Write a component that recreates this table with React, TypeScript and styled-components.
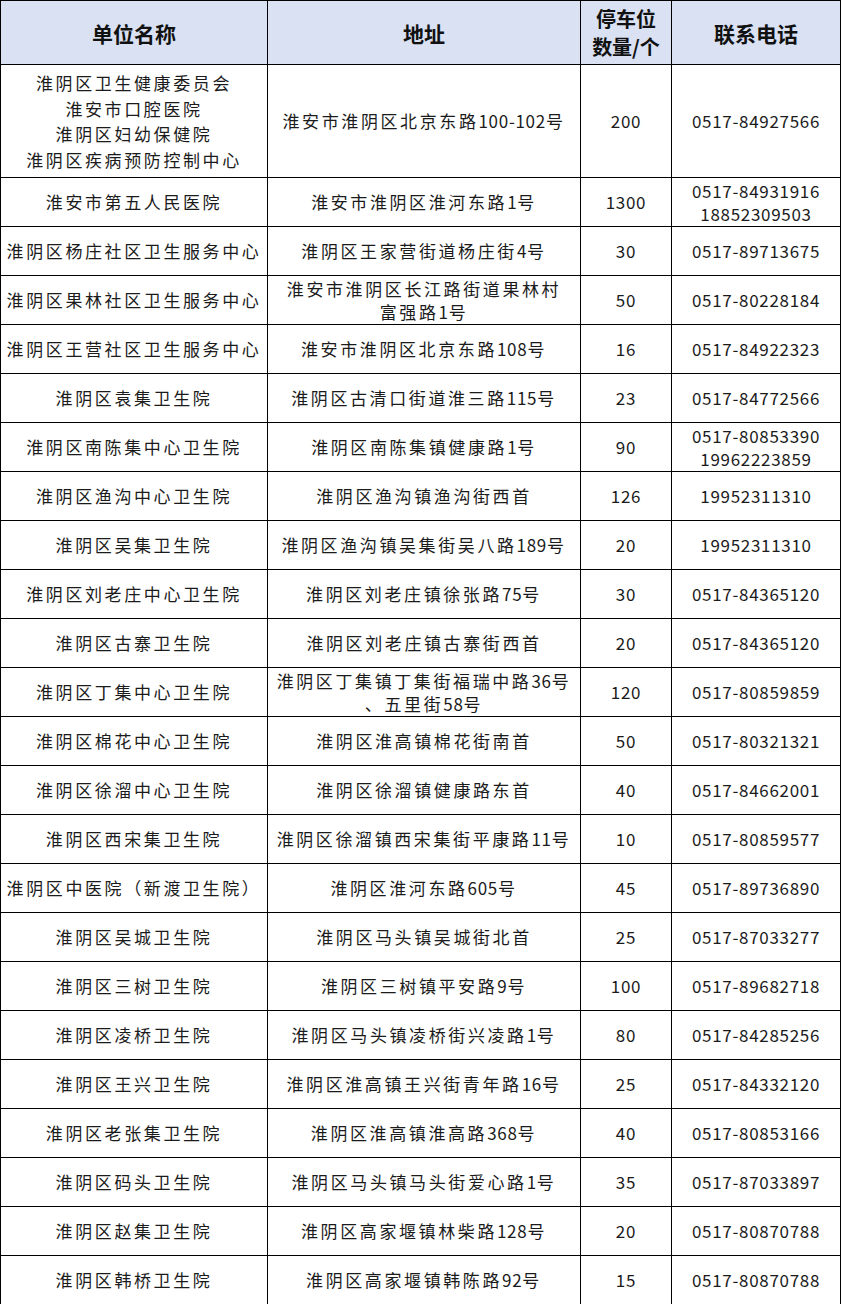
import React from "react";
import styled, { createGlobalStyle } from "styled-components";

interface Site {
    name: string[];
    address: string[];
    spaces: string;
    phones: string[];
}

const GlobalStyle = createGlobalStyle`
    html, body {
        margin: 0;
        padding: 0;
        background: #ffffff;
    }
    body {
        font-family: "Noto Sans CJK SC", sans-serif;
        color: #1b1b1b;
    }
`;

const Table = styled.table`
    width: 840px;
    border-collapse: collapse;
    table-layout: fixed;
    background: #ffffff;
`;

const Col = styled.col<{ $w: number }>`
    width: ${({ $w }) => $w}px;
`;

const HeadRow = styled.tr`
    height: 64px;
    background: #d9e1f3;
`;

const HeadCell = styled.th<{ $small?: boolean }>`
    border: 1px solid #000;
    padding: 0;
    text-align: center;
    vertical-align: middle;
    font-family: "Noto Sans CJK SC", serif;
    font-weight: 700;
    font-size: ${({ $small }) => ($small ? "20px" : "21px")};
    line-height: ${({ $small }) => ($small ? "28px" : "30px")};
    color: #111;
`;

const BodyRow = styled.tr<{ $h: number }>`
    height: ${({ $h }) => $h}px;
`;

const Cell = styled.td<{ $tall?: boolean }>`
    border: 1px solid #000;
    padding: 0;
    text-align: center;
    vertical-align: middle;
    font-size: 17px;
    line-height: ${({ $tall }) => ($tall ? "25.5px" : "23.5px")};
    letter-spacing: 2.6px;
    white-space: nowrap;
    overflow: hidden;
`;

// digits in the reference are narrow, so they get tighter tracking
const Num = styled.span`
    letter-spacing: 0.7px;
`;

const Line = styled.div``;

const sites: Site[] = [
    { name: ["淮阴区卫生健康委员会", "淮安市口腔医院", "淮阴区妇幼保健院", "淮阴区疾病预防控制中心"], address: ["淮安市淮阴区北京东路100-102号"], spaces: "200", phones: ["0517-84927566"] },
    { name: ["淮安市第五人民医院"], address: ["淮安市淮阴区淮河东路1号"], spaces: "1300", phones: ["0517-84931916", "18852309503"] },
    { name: ["淮阴区杨庄社区卫生服务中心"], address: ["淮阴区王家营街道杨庄街4号"], spaces: "30", phones: ["0517-89713675"] },
    { name: ["淮阴区果林社区卫生服务中心"], address: ["淮安市淮阴区长江路街道果林村", "富强路1号"], spaces: "50", phones: ["0517-80228184"] },
    { name: ["淮阴区王营社区卫生服务中心"], address: ["淮安市淮阴区北京东路108号"], spaces: "16", phones: ["0517-84922323"] },
    { name: ["淮阴区袁集卫生院"], address: ["淮阴区古清口街道淮三路115号"], spaces: "23", phones: ["0517-84772566"] },
    { name: ["淮阴区南陈集中心卫生院"], address: ["淮阴区南陈集镇健康路1号"], spaces: "90", phones: ["0517-80853390", "19962223859"] },
    { name: ["淮阴区渔沟中心卫生院"], address: ["淮阴区渔沟镇渔沟街西首"], spaces: "126", phones: ["19952311310"] },
    { name: ["淮阴区吴集卫生院"], address: ["淮阴区渔沟镇吴集街吴八路189号"], spaces: "20", phones: ["19952311310"] },
    { name: ["淮阴区刘老庄中心卫生院"], address: ["淮阴区刘老庄镇徐张路75号"], spaces: "30", phones: ["0517-84365120"] },
    { name: ["淮阴区古寨卫生院"], address: ["淮阴区刘老庄镇古寨街西首"], spaces: "20", phones: ["0517-84365120"] },
    { name: ["淮阴区丁集中心卫生院"], address: ["淮阴区丁集镇丁集街福瑞中路36号", "、五里街58号"], spaces: "120", phones: ["0517-80859859"] },
    { name: ["淮阴区棉花中心卫生院"], address: ["淮阴区淮高镇棉花街南首"], spaces: "50", phones: ["0517-80321321"] },
    { name: ["淮阴区徐溜中心卫生院"], address: ["淮阴区徐溜镇健康路东首"], spaces: "40", phones: ["0517-84662001"] },
    { name: ["淮阴区西宋集卫生院"], address: ["淮阴区徐溜镇西宋集街平康路11号"], spaces: "10", phones: ["0517-80859577"] },
    { name: ["淮阴区中医院（新渡卫生院）"], address: ["淮阴区淮河东路605号"], spaces: "45", phones: ["0517-89736890"] },
    { name: ["淮阴区吴城卫生院"], address: ["淮阴区马头镇吴城街北首"], spaces: "25", phones: ["0517-87033277"] },
    { name: ["淮阴区三树卫生院"], address: ["淮阴区三树镇平安路9号"], spaces: "100", phones: ["0517-89682718"] },
    { name: ["淮阴区凌桥卫生院"], address: ["淮阴区马头镇凌桥街兴凌路1号"], spaces: "80", phones: ["0517-84285256"] },
    { name: ["淮阴区王兴卫生院"], address: ["淮阴区淮高镇王兴街青年路16号"], spaces: "25", phones: ["0517-84332120"] },
    { name: ["淮阴区老张集卫生院"], address: ["淮阴区淮高镇淮高路368号"], spaces: "40", phones: ["0517-80853166"] },
    { name: ["淮阴区码头卫生院"], address: ["淮阴区马头镇马头街爱心路1号"], spaces: "35", phones: ["0517-87033897"] },
    { name: ["淮阴区赵集卫生院"], address: ["淮阴区高家堰镇林柴路128号"], spaces: "20", phones: ["0517-80870788"] },
    { name: ["淮阴区韩桥卫生院"], address: ["淮阴区高家堰镇韩陈路92号"], spaces: "15", phones: ["0517-80870788"] },
];

const Text: React.FC<{ value: string }> = ({ value }) => (
    <>
        {value.split(/([0-9-]+)/).map((part, i) =>
            /^[0-9-]+$/.test(part) ? <Num key={i}>{part}</Num> : part
        )}
    </>
);

const Lines: React.FC<{ items: string[] }> = ({ items }) => (
    <>
        {items.map((t, i) => (
            <Line key={i}>
                <Text value={t} />
            </Line>
        ))}
    </>
);

const App: React.FC = () => {
    return (
        <>
            <GlobalStyle />
            <Table>
                <colgroup>
                    <Col $w={267} />
                    <Col $w={313} />
                    <Col $w={91} />
                    <Col $w={169} />
                </colgroup>
                <thead>
                    <HeadRow>
                        <HeadCell>单位名称</HeadCell>
                        <HeadCell>地址</HeadCell>
                        <HeadCell $small>
                            停车位
                            <br />
                            数量/个
                        </HeadCell>
                        <HeadCell>联系电话</HeadCell>
                    </HeadRow>
                </thead>
                <tbody>
                    {sites.map((s, i) => (
                        <BodyRow key={i} $h={i === 0 ? 113 : 49}>
                            <Cell $tall={i === 0}>
                                <Lines items={s.name} />
                            </Cell>
                            <Cell>
                                <Lines items={s.address} />
                            </Cell>
                            <Cell>
                                <Text value={s.spaces} />
                            </Cell>
                            <Cell>
                                <Lines items={s.phones} />
                            </Cell>
                        </BodyRow>
                    ))}
                </tbody>
            </Table>
        </>
    );
};

export default App;
